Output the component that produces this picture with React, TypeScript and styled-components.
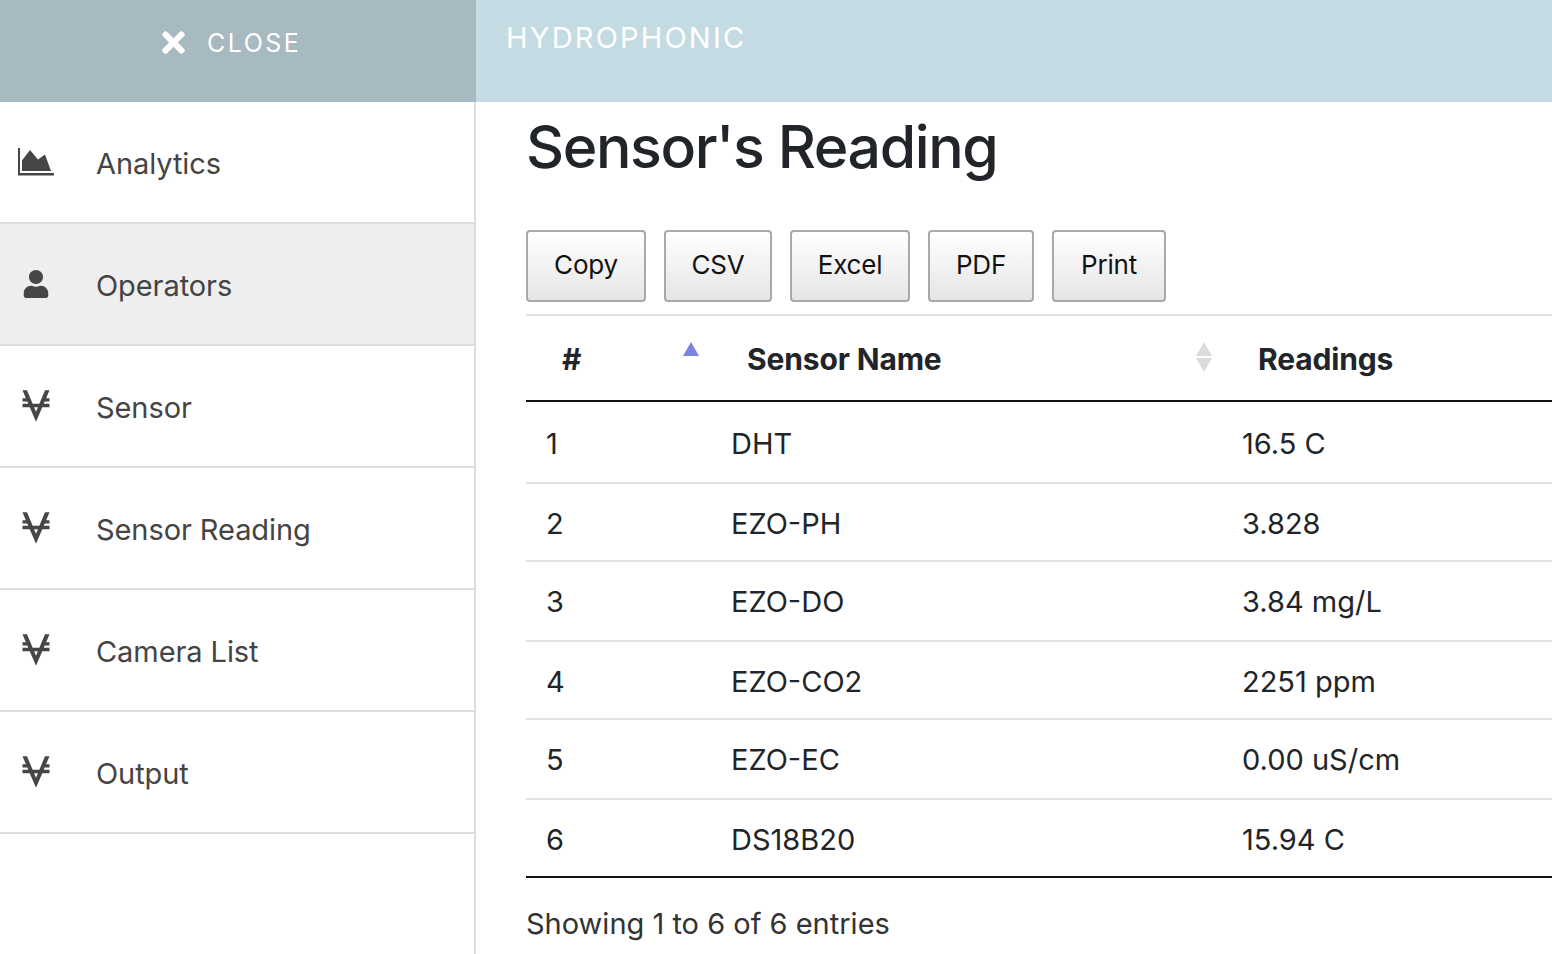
import React, { FC } from 'react';
import styled, { createGlobalStyle } from 'styled-components';
import { FaTimes, FaUser, FaViacoin } from 'react-icons/fa';

const AreaChartIcon: FC = (): JSX.Element => (
  <svg width="36" height="28" viewBox="0 0 36 28" fill="currentColor">
    <path d="M0 0h2v25h34v2.500H0z" />
    <path d="M4 12.500 12 2l8 9.500 7-5 6 16.500H4z" />
  </svg>
);

const menuItems = [
  { label: 'Analytics', icon: <AreaChartIcon /> },
  { label: 'Operators', icon: <FaUser size={28} />, active: true },
  { label: 'Sensor', icon: <FaViacoin size={36} /> },
  { label: 'Sensor Reading', icon: <FaViacoin size={36} /> },
  { label: 'Camera List', icon: <FaViacoin size={36} /> },
  { label: 'Output', icon: <FaViacoin size={36} /> },
];

const readings = [
  { id: 1, name: 'DHT', value: '16.5 C' },
  { id: 2, name: 'EZO-PH', value: '3.828' },
  { id: 3, name: 'EZO-DO', value: '3.84 mg/L' },
  { id: 4, name: 'EZO-CO2', value: '2251 ppm' },
  { id: 5, name: 'EZO-EC', value: '0.00 uS/cm' },
  { id: 6, name: 'DS18B20', value: '15.94 C' },
];

const exportButtons = [
  { label: 'Copy', width: 120 },
  { label: 'CSV', width: 108 },
  { label: 'Excel', width: 120 },
  { label: 'PDF', width: 106 },
  { label: 'Print', width: 114 },
];

const App: FC = (): JSX.Element => (
  <>
    <GlobalStyle />
    <Page>
      <Sidebar>
        <CloseBar>
          <CloseIcon />
          <CloseLabel>CLOSE</CloseLabel>
        </CloseBar>
        {menuItems.map((item) => (
          <MenuItem key={item.label} $active={item.active}>
            <MenuIcon>{item.icon}</MenuIcon>
            <span>{item.label}</span>
          </MenuItem>
        ))}
      </Sidebar>
      <Main>
        <TopBar>
          <Brand>HYDROPHONIC</Brand>
        </TopBar>
        <Content>
          <Title>Sensor's Reading</Title>
          <ButtonRow>
            {exportButtons.map((button) => (
              <ExportButton key={button.label} $width={button.width}>
                {button.label}
              </ExportButton>
            ))}
          </ButtonRow>
          <Table>
            <colgroup>
              <col width="185" />
              <col width="511" />
              <col />
            </colgroup>
            <thead>
              <tr>
                <HeadCell>
                  #<SortUp />
                </HeadCell>
                <HeadCell>
                  Sensor Name
                  <SortBoth />
                </HeadCell>
                <HeadCell>Readings</HeadCell>
              </tr>
            </thead>
            <tbody>
              {readings.map((row) => (
                <Row key={row.id}>
                  <Cell>{row.id}</Cell>
                  <Cell>{row.name}</Cell>
                  <Cell>{row.value}</Cell>
                </Row>
              ))}
            </tbody>
          </Table>
          <TableInfo>Showing 1 to 6 of 6 entries</TableInfo>
        </Content>
      </Main>
    </Page>
  </>
);

export default App;

const GlobalStyle = createGlobalStyle`
  html, body {
    margin: 0;
    height: 100%;
    overflow: hidden;
    background: #fff;
    font-family: Inter, "Liberation Sans", sans-serif;
  }
  * {
    box-sizing: border-box;
  }
`;

const Page = styled.div`
  display: flex;
  width: 1552px;
  height: 954px;
  overflow: hidden;
`;

const Sidebar = styled.aside`
  width: 476px;
  flex-shrink: 0;
  display: flex;
  flex-direction: column;
  border-right: 2px solid #dcdcdc;
`;

const CloseBar = styled.div`
  height: 102px;
  margin-right: -2px;
  background: #a7bac1;
  color: #fff;
  display: flex;
  align-items: center;
  padding: 0 0 18px 162px;
  flex-shrink: 0;
`;

const CloseIcon = styled(FaTimes)`
  flex: none;
  width: 23px;
  height: 33px;
`;

const CloseLabel = styled.span`
  margin-left: 22px;
  font-size: 25px;
  letter-spacing: 2.5px;
  line-height: 30px;
  position: relative;
  top: 1px;
`;

const MenuItem = styled.div<{ $active?: boolean }>`
  height: 122px;
  flex-shrink: 0;
  display: flex;
  align-items: center;
  padding: 2px 0 0 18px;
  border-bottom: 2px solid #dedede;
  background: ${(p) => (p.$active ? '#eeeeee' : '#fff')};
  color: #444;
  font-size: 29px;
  letter-spacing: -0.08px;
`;

const MenuIcon = styled.span`
  width: 78px;
  padding-right: 42px;
  display: flex;
  justify-content: center;
  color: #464646;
  position: relative;
  top: -1px;
`;

const Main = styled.main`
  flex: 1;
  min-width: 0;
  display: flex;
  flex-direction: column;
`;

const TopBar = styled.header`
  height: 102px;
  flex-shrink: 0;
  background: #c5dbe3;
  padding: 22px 30px 0;
`;

const Brand = styled.div`
  color: #fff;
  font-size: 29px;
  line-height: 32px;
  letter-spacing: 2.2px;
`;

const Content = styled.div`
  padding: 9px 0 0 50px;
`;

const Title = styled.h1`
  margin: 0 0 47px;
  color: #212529;
  font-size: 59px;
  font-weight: 500;
  line-height: 72px;
  letter-spacing: -1.4px;
`;

const ButtonRow = styled.div`
  display: flex;
  gap: 18px;
  margin-bottom: 12px;
`;

const ExportButton = styled.button<{ $width: number }>`
  width: ${(p) => p.$width}px;
  height: 72px;
  padding: 0 0 4px;
  border: 2px solid #a9a9a9;
  border-radius: 4px;
  background: linear-gradient(to bottom, #fff 0%, #e5e5e5 100%);
  color: #111;
  font-family: inherit;
  font-size: 26px;
  letter-spacing: -0.2px;
`;

const Table = styled.table`
  width: 1026px;
  table-layout: fixed;
  border-collapse: collapse;
  border-top: 2px solid #dee2e6;
  border-bottom: 2px solid #111;
  font-size: 29px;
  color: #212529;
`;

const HeadCell = styled.th`
  position: relative;
  height: 86px;
  padding: 2px 0 0 36px;
  border-bottom: 2px solid #111;
  font-size: 30px;
  font-weight: 700;
  text-align: left;
  letter-spacing: -0.15px;
`;

const SortUp = styled.span`
  position: absolute;
  top: 26px;
  right: 12px;
  width: 0;
  height: 0;
  border-left: 8px solid transparent;
  border-right: 8px solid transparent;
  border-bottom: 14px solid #7b83e0;
`;

const SortBoth = styled.span`
  position: absolute;
  top: 26px;
  right: 10px;
  width: 16px;
  height: 30px;
  &::before,
  &::after {
    content: '';
    position: absolute;
    left: 0;
    border-left: 8px solid transparent;
    border-right: 8px solid transparent;
  }
  &::before {
    top: 0;
    border-bottom: 14px solid #dcdcdc;
  }
  &::after {
    bottom: 0;
    border-top: 14px solid #dcdcdc;
  }
`;

const Row = styled.tr`
  height: 80px;
  &:nth-child(even) {
    height: 78px;
  }
  &:first-child {
    height: 82px;
  }
  &:nth-child(even) > td,
  &:first-child > td {
    padding-top: 2px;
  }
`;

const Cell = styled.td`
  padding: 0 0 0 20px;
  border-top: 2px solid #dee2e6;
  tr:first-child > & {
    border-top: none;
  }
`;

const TableInfo = styled.div`
  margin-top: 28px;
  color: #333;
  font-size: 29px;
  line-height: 36px;
`;
